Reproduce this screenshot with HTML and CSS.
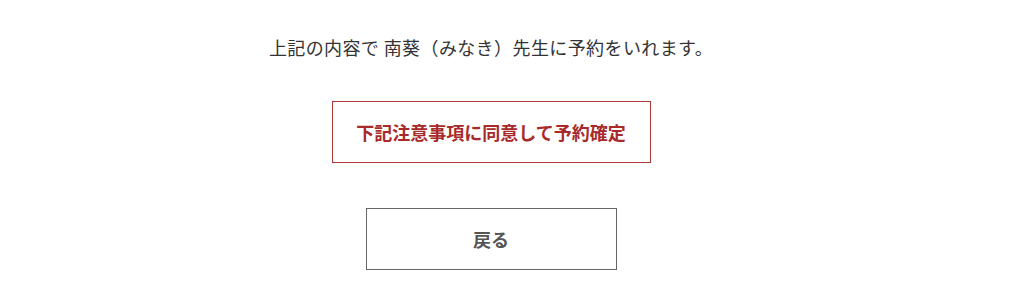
FILE: index.html
```html
<!DOCTYPE html>
<html lang="ja">
<head>
<meta charset="utf-8">
<link rel="stylesheet" href="styles.css">
</head>
<body>
<div class="confirm">
  <p class="message">上記の内容で 南葵（みなき）先生に予約をいれます。</p>
  <button class="btn btn-primary" type="button">下記注意事項に同意して予約確定</button>
  <button class="btn btn-back" type="button">戻る</button>
</div>
</body>
</html>
```
FILE: styles.css
```css
html, body {
  margin: 0;
  padding: 0;
  background: #ffffff;
}
body {
  font-family: "Noto Sans CJK JP", "Noto Sans", sans-serif;
  width: 1024px;
  height: 298px;
  overflow: hidden;
}
.confirm {
  width: 982px;
  display: flex;
  flex-direction: column;
  align-items: center;
  padding-top: 33px;
}
.message {
  margin: 0;
  font-size: 18px;
  line-height: 28px;
  color: #333333;
  letter-spacing: 0.4px;
}
.btn {
  box-sizing: border-box;
  height: 62px;
  background: #ffffff;
  font-family: inherit;
  font-size: 18px;
  font-weight: 700;
  padding: 0;
  display: flex;
  align-items: center;
  justify-content: center;
}
.btn-primary {
  width: 319px;
  margin-top: 40px;
  border: 1px solid #b03a3a;
  color: #a82a2a;
}
.btn-back {
  width: 251px;
  margin-top: 45px;
  border: 1px solid #666666;
  color: #555555;
}
```
